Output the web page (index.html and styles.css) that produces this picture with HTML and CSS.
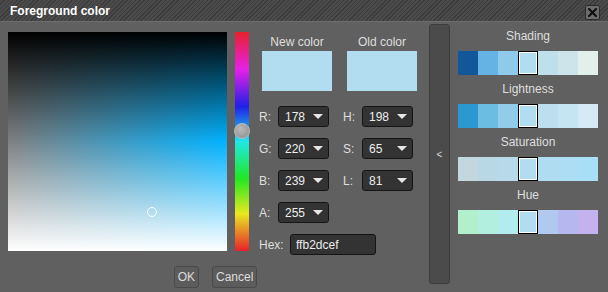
FILE: index.html
```html
<!DOCTYPE html>
<html lang="en">
<head>
  <meta charset="UTF-8" />
  <title>Foreground color</title>
  <link rel="stylesheet" href="styles.css">
</head>
<body>

  <div class="dialog">
    <div class="title-bar">
      <span class="title">Foreground color</span>
      <button class="close-btn" title="Close">
        <svg width="9" height="9" viewBox="0 0 9 9"><path d="M1 1 L8 8 M8 1 L1 8" stroke="#111" stroke-width="2.2" stroke-linecap="square"/></svg>
      </button>
    </div>

    <div class="dialog-body">
      <div class="editor">
        <div class="editor-top">
          <div class="sl-square"><span class="sl-marker"></span></div>
          <div class="hue-bar"><span class="hue-knob"></span></div>

          <div class="values">
            <div class="swatches">
              <div class="swatch-col">
                <div class="swatch-label">New color</div>
                <div class="swatch"></div>
              </div>
              <div class="swatch-col">
                <div class="swatch-label">Old color</div>
                <div class="swatch"></div>
              </div>
            </div>

            <div class="channels">
              <div class="channel"><label>R:</label><div class="dropdown">178</div></div>
              <div class="channel"><label>H:</label><div class="dropdown">198</div></div>
              <div class="channel"><label>G:</label><div class="dropdown">220</div></div>
              <div class="channel"><label>S:</label><div class="dropdown">65</div></div>
              <div class="channel"><label>B:</label><div class="dropdown">239</div></div>
              <div class="channel"><label>L:</label><div class="dropdown">81</div></div>
              <div class="channel"><label>A:</label><div class="dropdown">255</div></div>
              <div class="channel hex-row"><label>Hex:</label><input class="hex-input" type="text" value="ffb2dcef"></div>
            </div>
          </div>
        </div>

        <div class="buttons">
          <button class="btn">OK</button>
          <button class="btn">Cancel</button>
        </div>
      </div>

      <div class="collapse-bar">&lt;</div>

      <div class="palettes">
        <div class="palette-label">Shading</div>
        <div class="strip">
          <span style="background:#12579a"></span>
          <span style="background:#65b2e5"></span>
          <span style="background:#8ecbeb"></span>
          <span class="current" style="background:#b2dcef"></span>
          <span style="background:#bde0ec"></span>
          <span style="background:#cde5ea"></span>
          <span style="background:#e3efeb"></span>
        </div>

        <div class="palette-label">Lightness</div>
        <div class="strip">
          <span style="background:#2b99d0"></span>
          <span style="background:#6cbde2"></span>
          <span style="background:#91cde9"></span>
          <span class="current" style="background:#b2dcef"></span>
          <span style="background:#bcdff0"></span>
          <span style="background:#c6e5f3"></span>
          <span style="background:#d4eaf5"></span>
        </div>

        <div class="palette-label">Saturation</div>
        <div class="strip">
          <span style="background:#c3d7df"></span>
          <span style="background:#b9d8e6"></span>
          <span style="background:#b6daea"></span>
          <span class="current" style="background:#b2dcef"></span>
          <span style="background:#afdcf1"></span>
          <span style="background:#acddf4"></span>
          <span style="background:#a9def7"></span>
        </div>

        <div class="palette-label">Hue</div>
        <div class="strip">
          <span style="background:#b2f0cd"></span>
          <span style="background:#b2efdf"></span>
          <span style="background:#b2ecef"></span>
          <span class="current" style="background:#b2dcef"></span>
          <span style="background:#b2c9ef"></span>
          <span style="background:#b7b7ef"></span>
          <span style="background:#c4b2ef"></span>
        </div>
      </div>
    </div>
  </div>

</body>
</html>
```

FILE: styles.css
```css
body {
  margin: 0;
  background: #606060;
  font-family: "Liberation Sans", Arial, sans-serif;
  font-size: 12px;
  color: #dedede;
}

.dialog {
  width: 608px;
  height: 292px;
  overflow: hidden;
  background: #606060;
}

.title-bar {
  height: 21px;
  display: flex;
  align-items: center;
  justify-content: space-between;
  padding: 0 8px 0 10px;
  border-bottom: 1px solid #6e6e6e;
  background: repeating-linear-gradient(-45deg, #3b3b3b 0 1px, #4b4b4b 1px 3px);
}

.title {
  color: #fff;
  font-weight: bold;
  font-size: 12px;
}

.close-btn {
  width: 15px;
  height: 15px;
  margin-top: 3px;
  padding: 0;
  display: flex;
  align-items: center;
  justify-content: center;
  background: #6c6c6c;
  border: 1px solid #2c2c2c;
  border-radius: 2px;
}

.dialog-body {
  display: flex;
  height: 270px;
}

.editor {
  width: 415px;
  padding: 10px 0 0 8px;
  display: flex;
  flex-direction: column;
}

.editor-top {
  display: flex;
  align-items: flex-start;
}

.sl-square {
  position: relative;
  width: 219px;
  height: 219px;
  background:
    linear-gradient(to bottom, #000 0%, rgba(0, 0, 0, 0) 50%, rgba(255, 255, 255, 0) 50%, #fff 100%),
    linear-gradient(to right, #808080, #00b2ff);
}

.sl-marker {
  position: absolute;
  left: 139px;
  top: 175px;
  width: 8px;
  height: 8px;
  border: 1.5px solid #fff;
  border-radius: 50%;
}

.hue-bar {
  position: relative;
  width: 14px;
  height: 219px;
  margin-left: 8px;
  background: linear-gradient(to bottom, #e8202a 0%, #e820e8 17%, #2020e8 34%, #20e8e8 50%, #20e820 67%, #e8e820 83%, #e8202a 100%);
}

.hue-knob {
  position: absolute;
  left: -1px;
  top: 91px;
  width: 14px;
  height: 14px;
  border: 1px solid #bbb;
  border-radius: 50%;
  background: radial-gradient(circle at 40% 35%, #b8b8b8, #8c8c8c);
}

.values {
  width: 160px;
  margin-left: 10px;
}

.swatches {
  display: grid;
  grid-template-columns: 70px 70px;
  column-gap: 15px;
  margin-left: 3px;
}

.swatch-label {
  height: 19px;
  line-height: 20px;
  text-align: center;
  font-size: 12px;
}

.swatch {
  height: 40px;
  background: #b2dcef;
}

.channels {
  display: grid;
  grid-template-columns: 70px 70px;
  column-gap: 14px;
  row-gap: 11px;
  margin-top: 15px;
}

.channel {
  display: flex;
  align-items: center;
  height: 21px;
}

.channel label {
  width: 19px;
  font-size: 12px;
}

.dropdown {
  box-sizing: border-box;
  width: 51px;
  height: 21px;
  display: flex;
  align-items: center;
  padding-left: 6px;
  background: #333;
  border: 1px solid #151515;
  border-radius: 3px;
  color: #eee;
  font-size: 12px;
}

.dropdown::after {
  content: "";
  margin-left: auto;
  margin-right: 5px;
  border-left: 5px solid transparent;
  border-right: 5px solid transparent;
  border-top: 5px solid #e6e6e6;
}

.hex-row {
  grid-column: 1 / -1;
}

.hex-row label {
  width: 31px;
}

.hex-input {
  box-sizing: border-box;
  width: 86px;
  height: 21px;
  padding: 0 0 0 5px;
  background: #333;
  border: 1px solid #151515;
  border-radius: 3px;
  color: #eee;
  font-family: "Liberation Sans", Arial, sans-serif;
  font-size: 12px;
}

.buttons {
  display: flex;
  justify-content: center;
  gap: 13px;
  margin-top: 11px;
}

.btn {
  height: 22px;
  padding: 0 3px;
  background: #5c5c5c;
  border: 1px solid #4a4a4a;
  border-radius: 3px;
  color: #dcdcdc;
  font-family: "Liberation Sans", Arial, sans-serif;
  font-size: 12px;
}

.collapse-bar {
  box-sizing: border-box;
  width: 21px;
  height: 260px;
  margin: 2px 0 0 6px;
  display: flex;
  align-items: center;
  justify-content: center;
  background: #4b4b4b;
  border: 1px solid #3c3c3c;
  border-radius: 3px;
  color: #ddd;
  font-size: 10px;
}

.palettes {
  width: 140px;
  margin-left: 8px;
}

.palette-label {
  height: 29px;
  line-height: 29px;
  text-align: center;
  font-size: 12px;
}

.strip {
  display: flex;
  height: 24px;
}

.strip span {
  width: 20px;
  height: 24px;
}

.strip .current {
  box-shadow: inset 0 0 0 1px #000, inset 0 0 0 2px #fff;
}
```
